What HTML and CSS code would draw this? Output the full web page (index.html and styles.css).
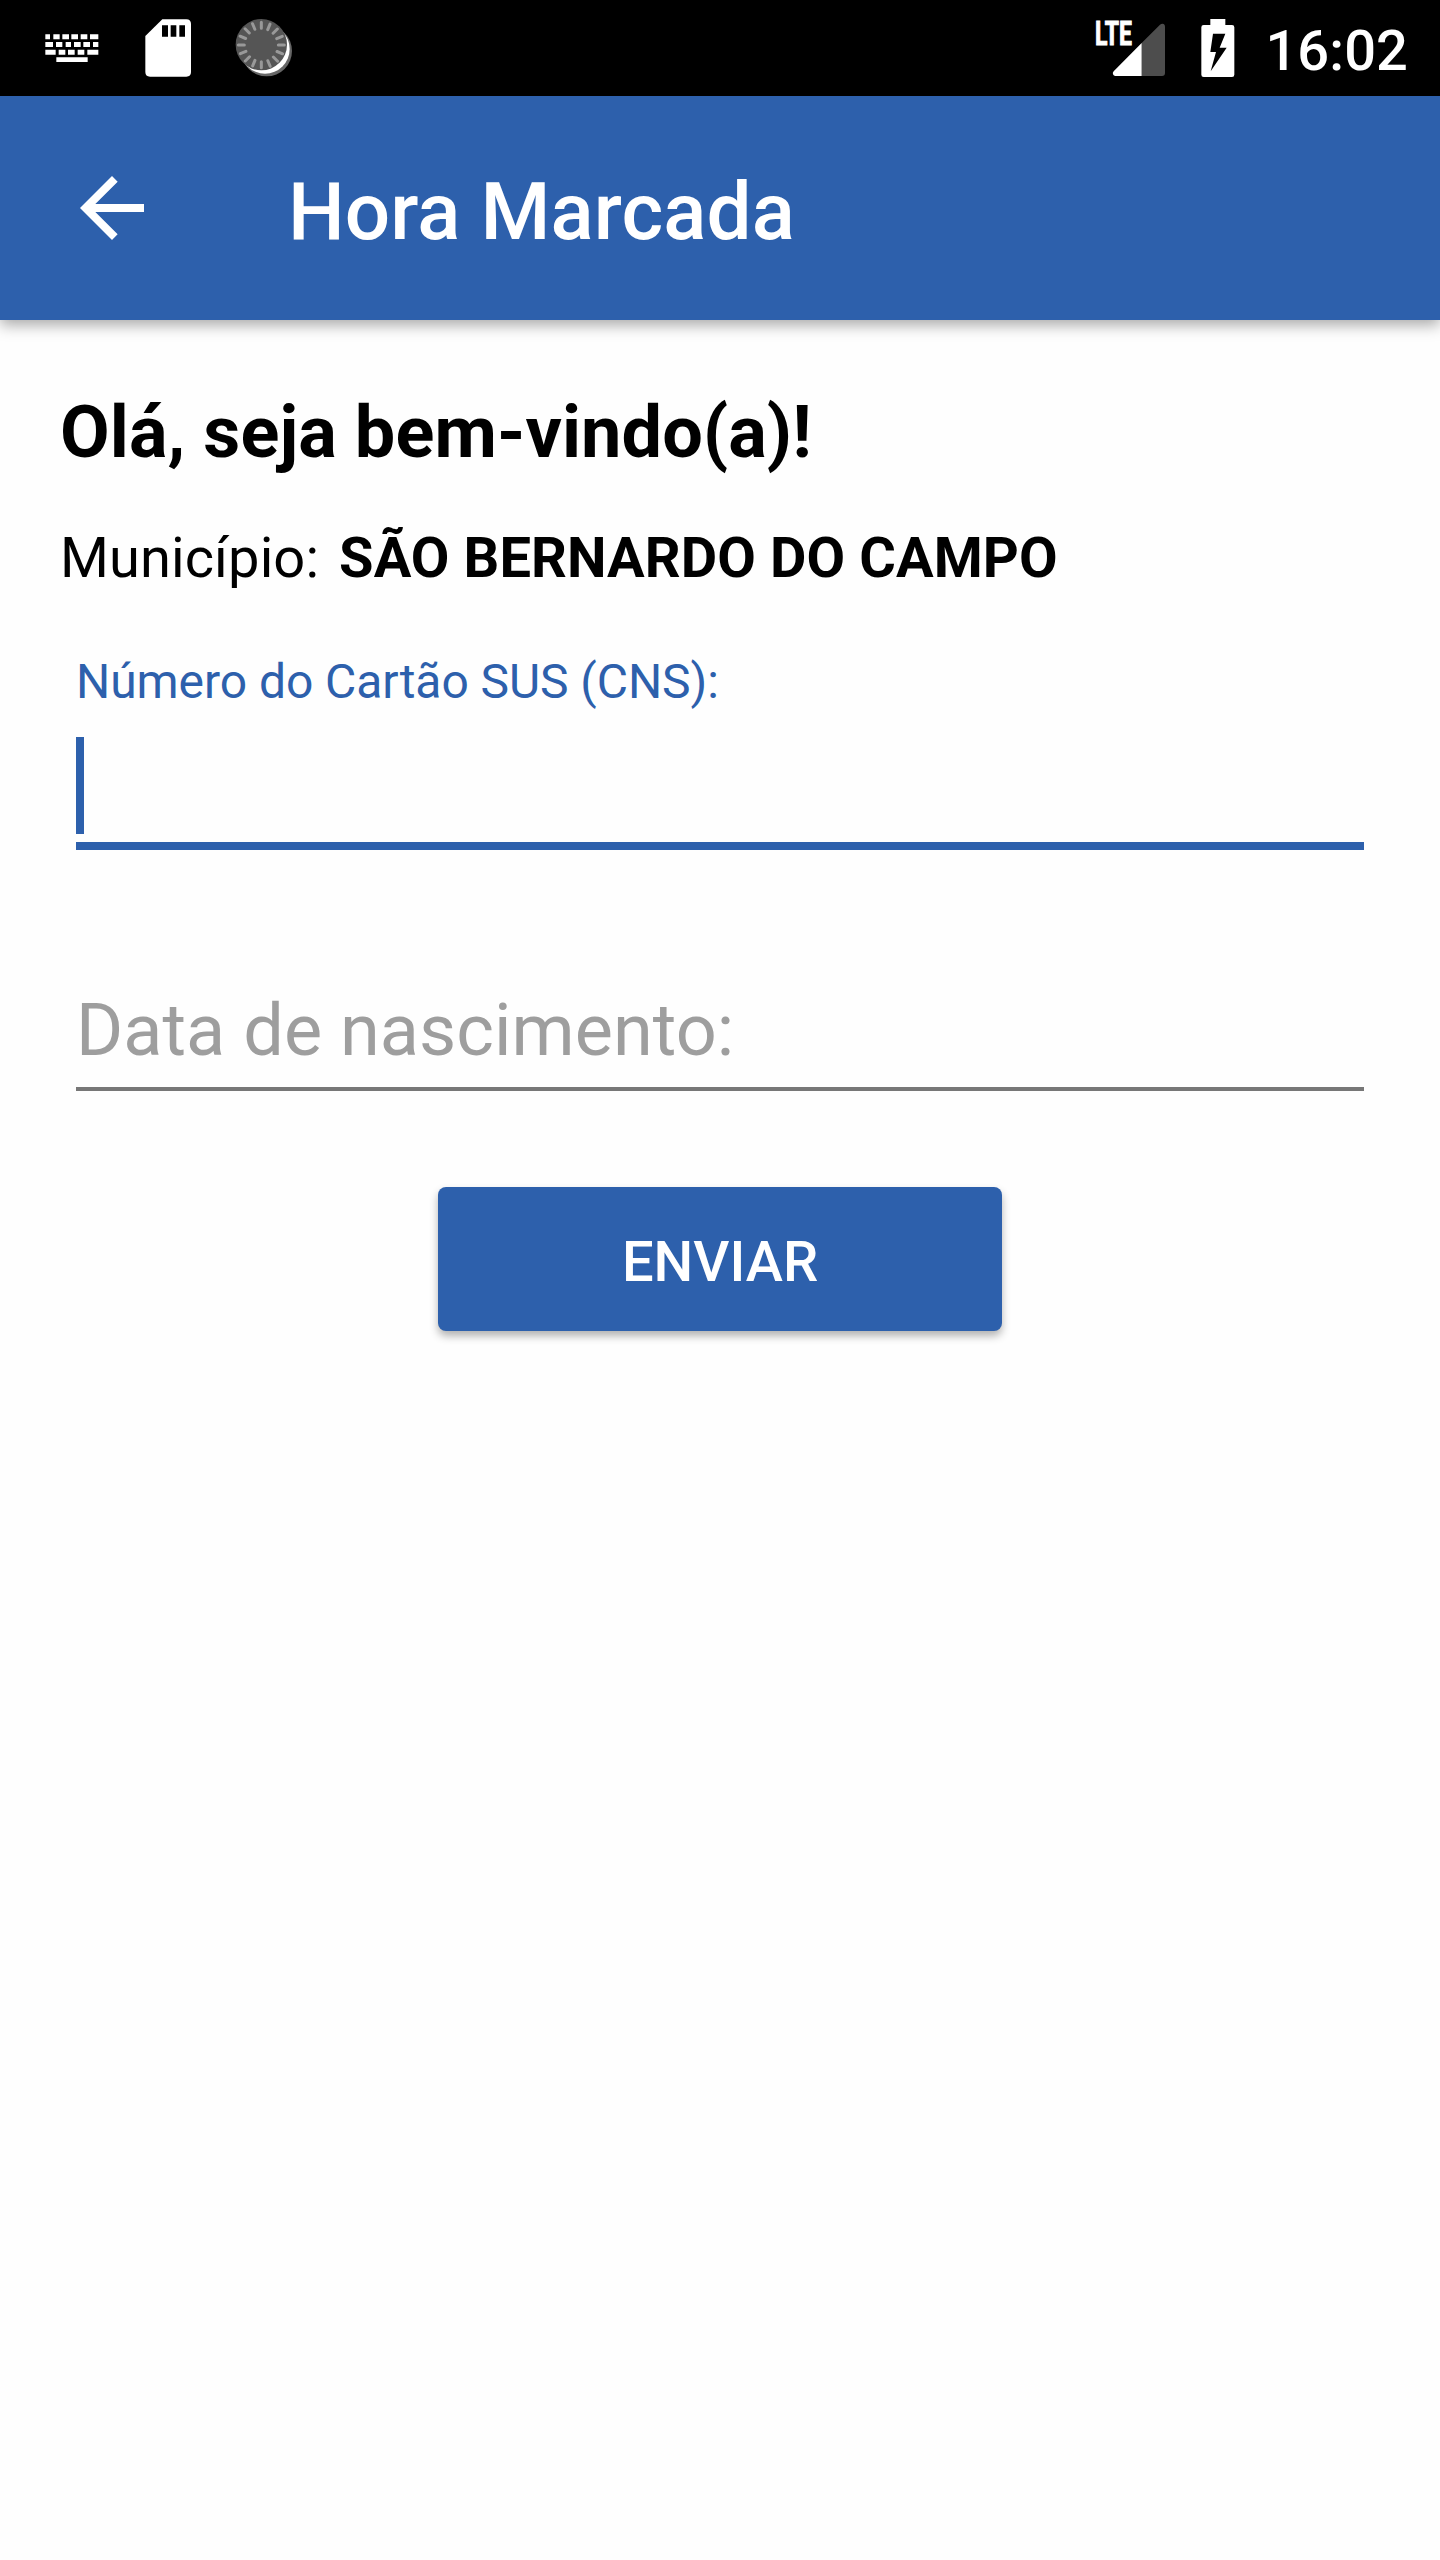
FILE: index.html
```html
<!DOCTYPE html>
<html lang="pt-BR">
<head>
<meta charset="utf-8">
<title>Hora Marcada</title>
<link rel="stylesheet" href="styles.css">
</head>
<body>
<div class="status-bar">
  <div class="status-group">
    <svg class="icon-keyboard" width="64" height="96" viewBox="120 0 192 288" fill="#fff">
      <path d="M136 103h14v15h-14zM160 103h19v15h-19zM187 103h20v15h-20zM214 103h20v15h-20zM242 103h20v15h-20zM270 103h25v15h-25z"/>
      <path d="M136 126h23v15h-23zM168 126h19v15h-19zM197 126h16v15h-16zM222 126h20v15h-20zM250 126h20v15h-20zM279 126h16v15h-16z"/>
      <path d="M136 149h31v15h-31zM176 149h20v15h-20zM204 149h20v15h-20zM233 149h20v15h-20zM262 149h33v15h-33zM169 172h94v14h-94z"/>
    </svg>
    <svg class="icon-sd" width="64" height="96" viewBox="408 0 192 288">
      <path fill="#fff" d="M487 58h72q14 0 14 14v144q0 14-14 14H450q-14 0-14-14V108z"/>
      <path d="M486 76h18v34h-18zM512 76h17v34h-17zM538 76h17v34h-17z"/>
    </svg>
    <svg class="icon-sync" width="64" height="96" viewBox="696 0 192 288">
      <circle cx="800" cy="153" r="76" fill="#666"/>
      <circle cx="795" cy="147" r="74" fill="#fff"/>
      <circle cx="784" cy="134" r="77" fill="#555"/>
      <g stroke="#999" stroke-width="9" stroke-linecap="round">
        <g id="ticks"><path d="M784 67v18M784 185v18M715 135h18M835 135h18"/></g>
        <use href="#ticks" transform="rotate(22.5 784 135)"/>
        <use href="#ticks" transform="rotate(45 784 135)"/>
        <use href="#ticks" transform="rotate(67.5 784 135)"/>
      </g>
    </svg>
  </div>
  <div class="status-group">
    <svg class="icon-signal" width="80" height="96" viewBox="66 0 240 288">
      <path fill="#4d4d4d" d="M215 129L270 74q6-5 11-2q4 2 4 8v139q0 9-9 9h-61z"/>
      <path fill="#fff" d="M215 129v99h-79q-5 0-7-5q-2-5 2-9z"/>
      <text class="lte" x="75" y="134" textLength="111" lengthAdjust="spacingAndGlyphs">LTE</text>
    </svg>
    <svg class="icon-battery" width="40" height="96" viewBox="383 0 120 288">
      <path fill="#fff" d="M420 57h45v18h20q7 0 7 7v142q0 7-7 7h-85q-7 0-7-7V82q0-7 7-7h20z"/>
      <path d="M428 101h37l-17 42h21l-48 71 16-58h-17z"/>
    </svg>
    <span class="clock">16:02</span>
  </div>
</div>
<header class="app-bar">
  <svg width="96" height="96" viewBox="0 0 24 24" fill="#fff"><path d="M20 11H7.83l5.59-5.59L12 4l-8 8 8 8 1.41-1.41L7.83 13H20v-2z"/></svg>
  <h1 class="title">Hora Marcada</h1>
</header>
<main class="content">
  <h2 class="greeting">Olá, seja bem-vindo(a)!</h2>
  <p class="city"><span>Município:</span><b>SÃO BERNARDO DO CAMPO</b></p>
  <div class="field field-active">
    <div class="field-label">Número do Cartão SUS (CNS):</div>
    <div class="caret"></div>
  </div>
  <div class="field field-date">Data de nascimento:</div>
  <button class="submit">ENVIAR</button>
</main>
</body>
</html>
```
FILE: styles.css
```css
* { box-sizing: border-box; margin: 0; }

body {
  width: 1440px;
  height: 2560px;
  background: #fefefe;
  color: #000;
  font-family: Roboto, sans-serif;
}

svg { display: block; flex: none; }

.status-bar {
  display: flex;
  justify-content: space-between;
  height: 96px;
  padding: 0 32px 0 40px;
  background: #000;
  color: #fff;
}

.status-group { display: flex; }
.icon-sd, .icon-sync { margin-left: 32px; }
.icon-battery { margin-left: 25.7px; }

.lte {
  font-size: 97px;
  font-weight: 700;
  fill: #fff;
  stroke: #fff;
  stroke-width: 3px;
}

.clock {
  margin-left: 27.5px;
  font-size: 56px;
  font-weight: 500;
  letter-spacing: .1px;
  line-height: 102px;
}

.app-bar {
  display: flex;
  align-items: center;
  height: 224px;
  padding-left: 64px;
  background: #2d60ac;
  color: #fff;
  box-shadow: 0 5px 14px rgba(0, 0, 0, .34);
}

.title {
  margin-left: 128px;
  padding-top: 8px;
  font-size: 80px;
  font-weight: 500;
  letter-spacing: .1px;
  line-height: 94px;
}

.content {
  display: flex;
  flex-direction: column;
  padding: 71px 60px 0;
}

.greeting {
  font-size: 72px;
  font-weight: 700;
  letter-spacing: .1px;
  line-height: 84px;
}

.city {
  display: flex;
  gap: 20px;
  margin-top: 50px;
  font-size: 56px;
  letter-spacing: .1px;
  line-height: 66px;
}

.field { margin: 0 16px; }

.field-active {
  height: 196px;
  margin-top: 63px;
  border-bottom: 8px solid #2d60ac;
}

.field-label {
  color: #2d60ac;
  font-size: 48px;
  letter-spacing: -.06px;
  line-height: 56px;
}

.caret { width: 8px; height: 97px; margin-top: 27px; background: #2d60ac; }

.field-date {
  height: 102px;
  margin-top: 139px;
  border-bottom: 4px solid #777;
  color: #9e9e9e;
  font-size: 72px;
  letter-spacing: .05px;
  line-height: 84px;
}

.submit {
  align-self: center;
  width: 564px;
  height: 144px;
  margin-top: 96px;
  padding: 6px 0 0;
  border: 0;
  border-radius: 8px;
  background: #2d60ac;
  color: #fff;
  font: 500 56px/66px Roboto, sans-serif;
  box-shadow: 0 5px 9px rgba(0, 0, 0, .3);
}
```
